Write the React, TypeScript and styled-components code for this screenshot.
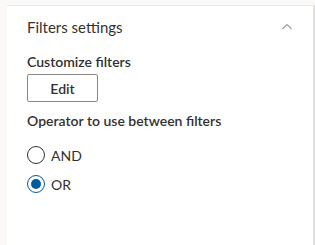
import React, { useState } from "react";
import styled, { createGlobalStyle } from "styled-components";

const GlobalStyle = createGlobalStyle`
  html, body {
    margin: 0;
    padding: 0;
    background: #faf9f8;
  }
  body {
    font-family: "Segoe UI", "Lato", "Open Sans", sans-serif;
    -webkit-font-smoothing: antialiased;
  }
`;

const Page = styled.div`
  display: flex;
  width: 315px;
  height: 245px;
  padding-left: 7px;
  box-sizing: border-box;
`;

const Panel = styled.section`
  flex: 1;
  background: #ffffff;
  border-right: 2px solid #e1dfdd;
  margin-top: 5px;
  border-top: 1px solid #edebe9;
  padding: 9px 20px 0 20px;
  box-sizing: border-box;
`;

const Header = styled.div`
  display: flex;
  align-items: center;
  justify-content: space-between;
  height: 24px;
`;

const Title = styled.h2`
  margin: 0;
  font-size: 15px;
  font-weight: 400;
  color: #323130;
`;

const Chevron = styled.svg`
  width: 12px;
  height: 12px;
`;

const Label = styled.div<{ $top: number }>`
  margin-top: ${(p) => p.$top}px;
  font-size: 14px;
  font-weight: 600;
  color: #323130;
  line-height: 20px;
`;

const Button = styled.button`
  margin-top: 2px;
  width: 71px;
  height: 28px;
  border: 1px solid #8a8886;
  border-radius: 2px;
  background: #ffffff;
  font-family: inherit;
  font-size: 14px;
  font-weight: 600;
  color: #323130;
  padding: 0;
  cursor: pointer;
`;

const Options = styled.div`
  display: flex;
  flex-direction: column;
  gap: 11px;
  margin-top: 15px;
`;

const Option = styled.label`
  display: flex;
  align-items: center;
  gap: 6px;
  font-size: 14px;
  color: #323130;
  cursor: pointer;
`;

const Circle = styled.span<{ $checked: boolean }>`
  width: 18px;
  height: 18px;
  border-radius: 50%;
  border: 1px solid ${(p) => (p.$checked ? "#005a9e" : "#323130")};
  box-sizing: border-box;
  display: flex;
  align-items: center;
  justify-content: center;
  &::after {
    content: "";
    width: 10px;
    height: 10px;
    border-radius: 50%;
    background: ${(p) => (p.$checked ? "#005a9e" : "transparent")};
  }
`;

export default function App() {
  const [op, setOp] = useState("OR");
  return (
    <>
      <GlobalStyle />
      <Page>
        <Panel>
          <Header>
            <Title>Filters settings</Title>
            <Chevron viewBox="0 0 12 12">
              <path d="M1.5 8 L6 3.5 L10.5 8" fill="none" stroke="#605e5c" strokeWidth="1" />
            </Chevron>
          </Header>
          <Label $top={13}>Customize filters</Label>
          <Button>Edit</Button>
          <Label $top={9}>Operator to use between filters</Label>
          <Options>
            {["AND", "OR"].map((o) => (
              <Option key={o} onClick={() => setOp(o)}>
                <Circle $checked={op === o} />
                {o}
              </Option>
            ))}
          </Options>
        </Panel>
      </Page>
    </>
  );
}
